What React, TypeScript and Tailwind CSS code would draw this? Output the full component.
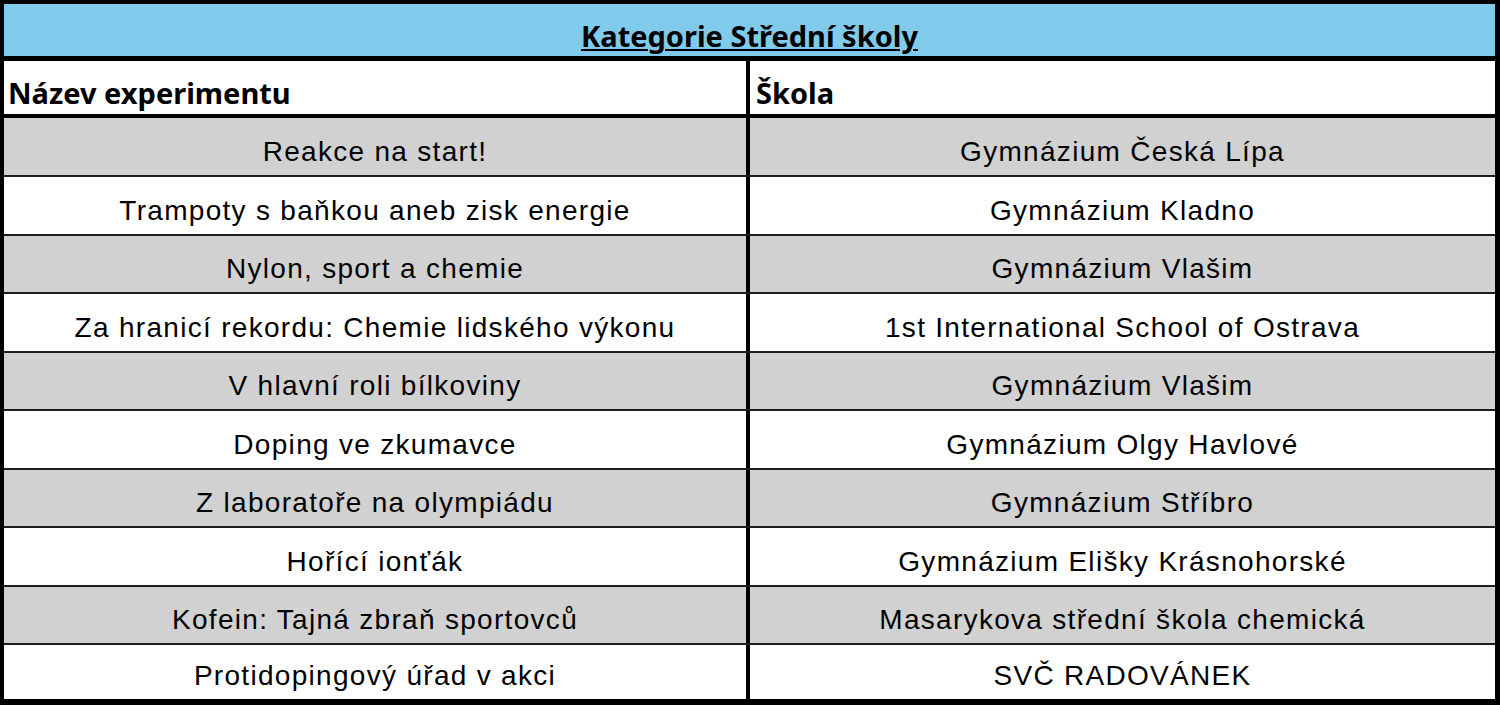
import React from 'react';

const rows: [string, string][] = [
  ['Reakce na start!', 'Gymnázium Česká Lípa'],
  ['Trampoty s baňkou aneb zisk energie', 'Gymnázium Kladno'],
  ['Nylon, sport a chemie', 'Gymnázium Vlašim'],
  ['Za hranicí rekordu: Chemie lidského výkonu', '1st International School of Ostrava'],
  ['V hlavní roli bílkoviny', 'Gymnázium Vlašim'],
  ['Doping ve zkumavce', 'Gymnázium Olgy Havlové'],
  ['Z laboratoře na olympiádu', 'Gymnázium Stříbro'],
  ['Hořící ionťák', 'Gymnázium Elišky Krásnohorské'],
  ['Kofein: Tajná zbraň sportovců', 'Masarykova střední škola chemická'],
  ['Protidopingový úřad v akci', 'SVČ RADOVÁNEK'],
];

const heading = "font-['Noto_Sans',sans-serif] font-bold text-[29px] leading-none text-black";
const cell = "font-['Liberation_Sans',Arial,sans-serif] text-[28px] tracking-[1.3px] leading-none text-black whitespace-nowrap";

export default function App() {
  return (
    <div className="w-[1500px] h-[705px] bg-white border-black border-t-4 border-l-4 border-r-[5px] border-b-[6px] flex flex-col">
      {/* title */}
      <div className="h-[57px] shrink-0 bg-[#80cbec] flex items-end justify-center pb-[6px] border-b-[5px] border-black">
        <span className={`${heading} underline decoration-2 underline-offset-[2px]`}>
          Kategorie Střední školy
        </span>
      </div>

      {/* column headers */}
      <div className="h-[57px] shrink-0 flex border-b-4 border-black">
        <div className="w-[746px] border-r-4 border-black flex items-end pl-[4px] pb-[7px]">
          <span className={heading}>Název experimentu</span>
        </div>
        <div className="flex-1 flex items-end pl-[6px] pb-[7px]">
          <span className={heading}>Škola</span>
        </div>
      </div>

      {/* body */}
      <div className="flex-1 flex flex-col">
        {rows.map(([name, school], i) => {
          const last = i === rows.length - 1;
          return (
            <div
              key={i}
              className={`flex ${last ? 'flex-1' : i === 0 ? 'h-[57px] shrink-0' : 'h-[58.5px] shrink-0'} ${i % 2 === 0 ? 'bg-[#d1d1d1]' : 'bg-white'} ${i > 0 ? 'border-t-2 border-[#1c1c1c]' : ''}`}
            >
              <div className="w-[746px] border-r-4 border-black flex items-end justify-center pb-[9px]">
                <span className={cell}>{name}</span>
              </div>
              <div className="flex-1 flex items-end justify-center pb-[9px]">
                <span className={cell}>{school}</span>
              </div>
            </div>
          );
        })}
      </div>
    </div>
  );
}
